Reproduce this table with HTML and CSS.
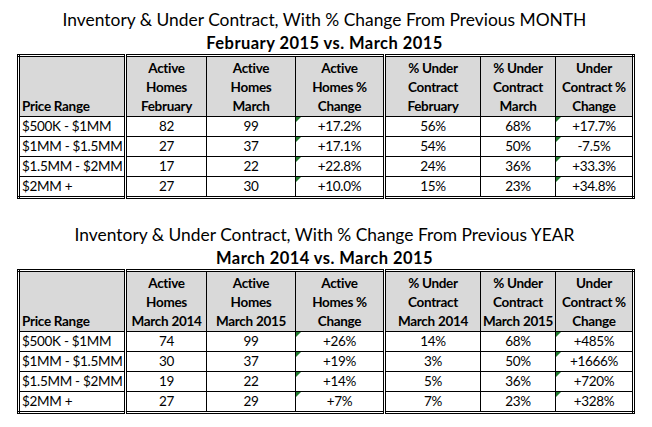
FILE: index.html
```html
<!DOCTYPE html>
<html>
<head>
<meta charset="utf-8">
<link rel="stylesheet" href="styles.css">
</head>
<body>
<div class="page">
  <section class="block">
    <div class="title">Inventory &amp; Under Contract, With % Change From Previous MONTH</div>
    <div class="subtitle">February 2015 vs. March 2015</div>
    <table class="grid">
      <colgroup>
        <col class="c1"><col class="c2"><col class="c3"><col class="c4"><col class="c5"><col class="c6"><col class="c7">
      </colgroup>
      <thead>
        <tr>
          <th class="range sep">Price Range</th>
          <th>Active<br>Homes<br>February</th>
          <th>Active<br>Homes<br>March</th>
          <th class="sep">Active<br>Homes %<br>Change</th>
          <th>% Under<br>Contract<br>February</th>
          <th>% Under<br>Contract<br>March</th>
          <th>Under<br>Contract %<br>Change</th>
        </tr>
      </thead>
      <tbody>
        <tr><td class="range sep">$500K - $1MM</td><td>82</td><td>99</td><td class="sep flag">+17.2%</td><td>56%</td><td>68%</td><td class="flag">+17.7%</td></tr>
        <tr><td class="range sep">$1MM - $1.5MM</td><td>27</td><td>37</td><td class="sep flag">+17.1%</td><td>54%</td><td>50%</td><td class="flag">-7.5%</td></tr>
        <tr><td class="range sep">$1.5MM - $2MM</td><td>17</td><td>22</td><td class="sep flag">+22.8%</td><td>24%</td><td>36%</td><td class="flag">+33.3%</td></tr>
        <tr><td class="range sep">$2MM +</td><td>27</td><td>30</td><td class="sep flag">+10.0%</td><td>15%</td><td>23%</td><td class="flag">+34.8%</td></tr>
      </tbody>
    </table>
  </section>
  <section class="block second">
    <div class="title">Inventory &amp; Under Contract, With % Change From Previous YEAR</div>
    <div class="subtitle">March 2014 vs. March 2015</div>
    <table class="grid">
      <colgroup>
        <col class="c1"><col class="c2"><col class="c3"><col class="c4"><col class="c5"><col class="c6"><col class="c7">
      </colgroup>
      <thead>
        <tr>
          <th class="range sep">Price Range</th>
          <th>Active<br>Homes<br>March 2014</th>
          <th>Active<br>Homes<br>March 2015</th>
          <th class="sep">Active<br>Homes %<br>Change</th>
          <th>% Under<br>Contract<br>March 2014</th>
          <th>% Under<br>Contract<br>March 2015</th>
          <th>Under<br>Contract %<br>Change</th>
        </tr>
      </thead>
      <tbody>
        <tr><td class="range sep">$500K - $1MM</td><td>74</td><td>99</td><td class="sep flag">+26%</td><td>14%</td><td>68%</td><td class="flag">+485%</td></tr>
        <tr><td class="range sep">$1MM - $1.5MM</td><td>30</td><td>37</td><td class="sep flag">+19%</td><td>3%</td><td>50%</td><td class="flag">+1666%</td></tr>
        <tr><td class="range sep">$1.5MM - $2MM</td><td>19</td><td>22</td><td class="sep flag">+14%</td><td>5%</td><td>36%</td><td class="flag">+720%</td></tr>
        <tr><td class="range sep">$2MM +</td><td>27</td><td>29</td><td class="sep flag">+7%</td><td>7%</td><td>23%</td><td class="flag">+328%</td></tr>
      </tbody>
    </table>
  </section>
</div>
</body>
</html>
```
FILE: styles.css
```css
html, body {
  margin: 0;
  padding: 0;
  background: #ffffff;
}
body {
  font-family: Lato, "Open Sans", sans-serif;
  color: #000000;
}
.page {
  width: 652px;
  padding: 8px 0 0 17px;
  box-sizing: border-box;
}
.block {
  width: 615px;
}
.second {
  margin-top: 24px;
}
.title {
  text-align: center;
  font-size: 17.4px;
  line-height: 24px;
}
.subtitle {
  text-align: center;
  font-size: 16.5px;
  font-weight: 700;
  letter-spacing: 0.45px;
  line-height: 22px;
}
.grid {
  border-collapse: collapse;
  table-layout: fixed;
  width: 615px;
  border: 3px double #000;
  font-size: 13.5px;
  letter-spacing: -0.3px;
}
.c1 { width: 107px; }
.c2 { width: 81px; }
.c3 { width: 89px; }
.c4 { width: 89px; }
.c5 { width: 96px; }
.c6 { width: 75px; }
.c7 { width: 78px; }
.grid th, .grid td {
  border: 1px solid #000;
  padding: 0 2px;
  text-align: center;
  line-height: 19px;
  height: 19px;
  white-space: nowrap;
  overflow: hidden;
}
.grid th {
  background: #d9d9d9;
  font-weight: 700;
  vertical-align: bottom;
  height: 59px;
}
.grid .range {
  text-align: left;
}
.grid .sep {
  border-right: 3px double #000;
}
.grid .flag {
  position: relative;
}
.grid .flag::before {
  content: "";
  position: absolute;
  left: 0;
  top: 0;
  border-top: 5px solid #1f7a2c;
  border-right: 5px solid transparent;
}
```
